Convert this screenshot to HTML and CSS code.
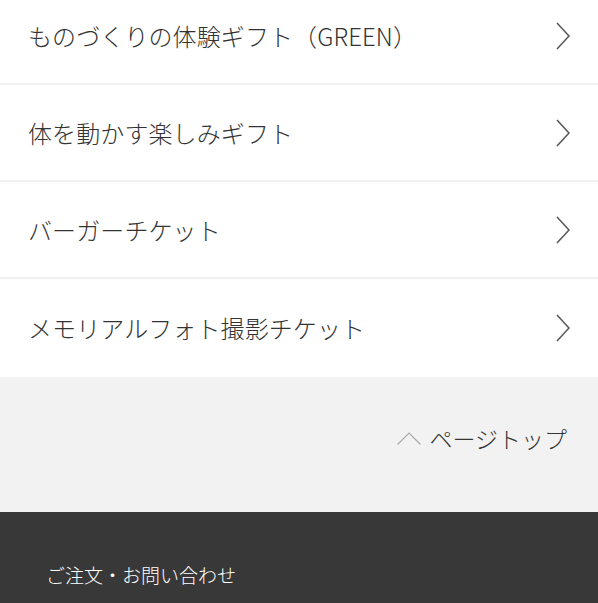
FILE: index.html
```html
<!DOCTYPE html>
<html lang="ja">
<head>
<meta charset="utf-8">
<link rel="stylesheet" href="styles.css">
</head>
<body>
<ul class="menu">
  <li class="item"><span class="label">ものづくりの体験ギフト（GREEN）</span><svg class="chev" width="14" height="28" viewBox="0 0 14 28"><path d="M1 1 L13 14 L1 27" fill="none" stroke="#595959" stroke-width="1.6"/></svg></li>
  <li class="item"><span class="label">体を動かす楽しみギフト</span><svg class="chev" width="14" height="28" viewBox="0 0 14 28"><path d="M1 1 L13 14 L1 27" fill="none" stroke="#595959" stroke-width="1.6"/></svg></li>
  <li class="item"><span class="label">バーガーチケット</span><svg class="chev" width="14" height="28" viewBox="0 0 14 28"><path d="M1 1 L13 14 L1 27" fill="none" stroke="#595959" stroke-width="1.6"/></svg></li>
  <li class="item last"><span class="label">メモリアルフォト撮影チケット</span><svg class="chev" width="14" height="28" viewBox="0 0 14 28"><path d="M1 1 L13 14 L1 27" fill="none" stroke="#595959" stroke-width="1.6"/></svg></li>
</ul>
<div class="pagetop">
  <a class="top-link"><svg class="caret" width="24" height="14" viewBox="0 0 24 14"><path d="M0.5 13.5 L12 2 L23.5 13.5" fill="none" stroke="#aaaaaa" stroke-width="1.2"/></svg><span>ページトップ</span></a>
</div>
<footer class="footer">
  <p class="contact">ご注文・お問い合わせ</p>
</footer>
</body>
</html>
```

FILE: styles.css
```css
html, body {
  margin: 0;
  padding: 0;
  background: #ffffff;
  font-family: "Noto Sans CJK JP", "Noto Sans", sans-serif;
  font-weight: 300;
  color: #333333;
}
.menu {
  list-style: none;
  margin: -12px 0 0 0;
  padding: 0;
}
.item {
  display: flex;
  align-items: center;
  justify-content: space-between;
  height: 95px;
  padding: 0 28px 0 28px;
  border-bottom: 2px solid #f1f1f1;
  background: #ffffff;
}
.item.last {
  border-bottom: none;
  height: 98px;
}
.label {
  font-size: 24px;
  line-height: 1;
  letter-spacing: 0.1px;
  color: #333333;
}
.chev {
  display: block;
  flex-shrink: 0;
}
.pagetop {
  height: 135px;
  background: #f2f2f2;
  display: flex;
  justify-content: flex-end;
  align-items: center;
  padding-right: 31px;
  padding-bottom: 13px;
  box-sizing: border-box;
}
.top-link {
  display: flex;
  align-items: center;
  gap: 8px;
  font-size: 23px;
  color: #333333;
}
.caret {
  display: block;
  margin-top: -1px;
}
.footer {
  background: #383838;
  height: 120px;
  padding: 49px 0 0 46px;
  box-sizing: border-box;
}
.contact {
  margin: 0;
  color: #ffffff;
  font-size: 19px;
  line-height: 28px;
}
```
